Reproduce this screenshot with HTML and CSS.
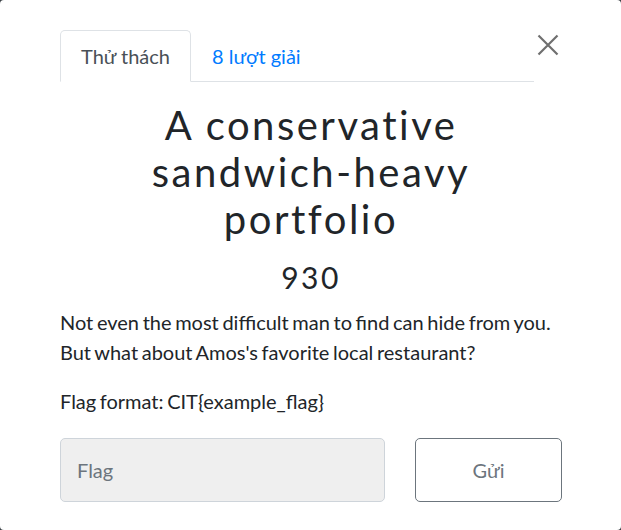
FILE: index.html
```html
<!DOCTYPE html>
<html lang="vi">
<head>
<meta charset="utf-8">
<title>Challenge</title>
<link rel="stylesheet" href="styles.css">
</head>
<body>
<div class="modal">
  <div class="header">
    <nav class="tabs">
      <a class="tab active">Thử thách</a>
      <a class="tab">8 lượt giải</a>
    </nav>
    <button class="close" aria-label="Close">
      <svg width="22" height="22" viewBox="0 0 22 22"><path d="M1.5 1.5 L20.5 20.5 M20.5 1.5 L1.5 20.5" stroke="#6f6f6f" stroke-width="2.2" fill="none"/></svg>
    </button>
  </div>
  <h2 class="name">A conservative sandwich-heavy portfolio</h2>
  <h3 class="value">930</h3>
  <p class="desc">Not even the most difficult man to find can hide from you. But what about Amos's favorite local restaurant?</p>
  <p class="desc fmt">Flag format: CIT{example_flag}</p>
  <form class="submit">
    <input class="flag" type="text" placeholder="Flag">
    <button class="send" type="button">Gửi</button>
  </form>
</div>
</body>
</html>
```
FILE: styles.css
```css
html, body {
  margin: 0;
  padding: 0;
  background: #3a3f44;
}
body {
  font-family: Lato, "Open Sans", sans-serif;
  color: #212529;
}
.modal {
  width: 621px;
  height: 530px;
  box-sizing: border-box;
  background: #fff;
  border-radius: 4px;
  padding: 30px 59px 0 60px;
}
.header {
  display: flex;
  align-items: flex-start;
}
.tabs {
  flex: 1;
  display: flex;
  border-bottom: 1px solid #dee2e6;
}
.tab {
  display: block;
  font-size: 20px;
  line-height: 30px;
  padding: 10px 20px;
  border: 1px solid transparent;
  border-top-left-radius: 5px;
  border-top-right-radius: 5px;
  margin-bottom: -1px;
  color: #007bff;
}
.tab.active {
  color: #495057;
  border-color: #dee2e6 #dee2e6 #fff;
  background: #fff;
}
.close {
  width: 28px;
  height: 40px;
  padding: 4px 0 0 0;
  margin: 0;
  border: 0;
  background: none;
  display: flex;
  justify-content: center;
}
.name {
  margin: 20px 0 0 0;
  font-size: 40px;
  line-height: 47px;
  font-weight: 400;
  letter-spacing: 2.5px;
  text-align: center;
}
.value {
  margin: 16px 0 0 0;
  font-size: 30px;
  line-height: 36px;
  font-weight: 400;
  letter-spacing: 2.5px;
  text-align: center;
}
.desc {
  margin: 13px 0 0 0;
  font-size: 20px;
  line-height: 29.5px;
  word-spacing: -1.5px;
}
.fmt {
  margin-top: 20px;
}
.submit {
  display: flex;
  gap: 30px;
  margin-top: 21px;
}
.flag {
  flex: 1;
  height: 64px;
  box-sizing: border-box;
  background: #efefef;
  border: 1px solid #ced4da;
  border-radius: 5px;
  padding: 0 16px;
  font-family: Lato, sans-serif;
  font-size: 20px;
  color: #495057;
}
.flag::placeholder {
  color: #6c757d;
}
.send {
  width: 147px;
  height: 64px;
  background: #fff;
  border: 1px solid #6c757d;
  border-radius: 5px;
  font-family: Lato, sans-serif;
  font-size: 20px;
  color: #6c757d;
}
```
